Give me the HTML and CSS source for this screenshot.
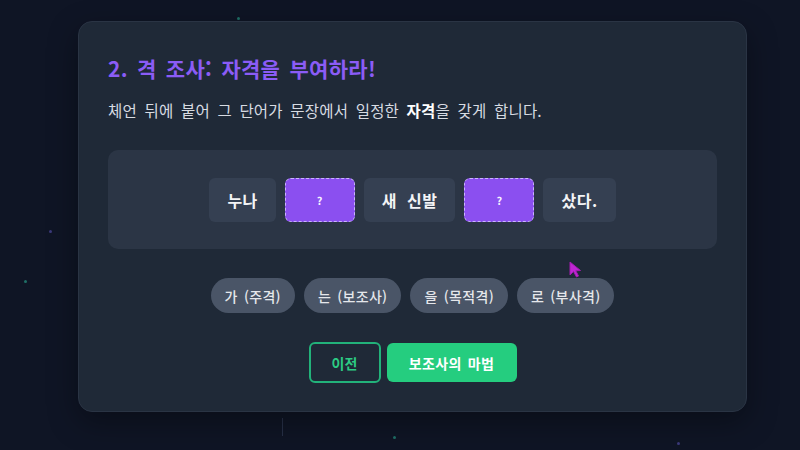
FILE: index.html
```html
<!DOCTYPE html>
<html lang="ko">
<head>
<meta charset="utf-8">
<title>격 조사</title>
<link rel="stylesheet" href="styles.css">
</head>
<body>
<div class="bg">
  <span class="dot teal" style="left:237px;top:17px"></span>
  <span class="dot purple" style="left:49px;top:230px"></span>
  <span class="dot teal" style="left:24px;top:280px"></span>
  <span class="line" style="left:282px;top:418px"></span>
  <span class="dot teal" style="left:393px;top:436px"></span>
  <span class="dot purple" style="left:677px;top:442px"></span>
</div>
<main class="card">
  <h1 class="title">2. 격 조사: 자격을 부여하라!</h1>
  <p class="desc">체언 뒤에 붙어 그 단어가 문장에서 일정한 <b>자격</b>을 갖게 합니다.</p>
  <div class="sentence">
    <span class="word">누나</span>
    <span class="word blank">?</span>
    <span class="word">새 신발</span>
    <span class="word blank">?</span>
    <span class="word">샀다.</span>
  </div>
  <div class="chips">
    <button class="chip">가 (주격)</button>
    <button class="chip">는 (보조사)</button>
    <button class="chip">을 (목적격)</button>
    <button class="chip">로 (부사격)</button>
  </div>
  <div class="actions">
    <button class="btn outline">이전</button>
    <button class="btn solid">보조사의 마법</button>
  </div>
</main>
<svg class="cursor" width="14" height="18" viewBox="0 0 14 18"><path d="M1 1 L1 14 L4.5 10.5 L7.5 16 L9.5 15 L6.8 9.8 L11.5 9.5 Z" fill="#c026d3" stroke="#a21caf" stroke-width="1"/></svg>
</body>
</html>
```

FILE: styles.css
```css
* { box-sizing: border-box; }
html, body { margin: 0; padding: 0; }
body {
  width: 800px;
  height: 450px;
  overflow: hidden;
  background: #0f1525;
  font-family: "Noto Sans CJK KR", "Noto Sans", sans-serif;
  position: relative;
}
.bg { position: absolute; inset: 0; }
.dot { position: absolute; width: 3px; height: 3px; border-radius: 50%; }
.dot.teal { background: #1f6f66; }
.dot.purple { background: #3b3a7a; }
.line { position: absolute; width: 1px; height: 18px; background: #273047; }
.card {
  position: relative;
  margin: 21px 0 0 78px;
  width: 669px;
  background: #1f2937;
  border: 1px solid #2a3444;
  border-radius: 14px;
  padding: 32px 29px 28px;
  box-shadow: 0 10px 30px rgba(0,0,0,0.35);
}
.title {
  margin: 0;
  font-size: 21px;
  line-height: 28px;
  font-weight: 700;
  color: #8b5cf6;
  word-spacing: 3px;
  letter-spacing: 0.3px;
}
.desc {
  margin: 16px 0 0;
  font-size: 15.5px;
  line-height: 24px;
  color: #d7dbe2;
  word-spacing: 3px;
  letter-spacing: 0.2px;
}
.desc b { color: #ffffff; font-weight: 700; }
.sentence {
  margin-top: 28px;
  height: 99px;
  background: #2b3545;
  border-radius: 10px;
  display: flex;
  align-items: center;
  justify-content: center;
  gap: 9px;
}
.word {
  height: 44px;
  padding: 0 18px;
  display: flex;
  align-items: center;
  justify-content: center;
  background: #354052;
  border-radius: 6px;
  color: #f3f4f6;
  font-size: 16px;
  font-weight: 700;
  word-spacing: 5px;
  letter-spacing: 0.5px;
}
.word.blank {
  width: 70px;
  background: #8b4ff0;
  border: 1px dashed #c9b6fb;
  font-size: 11px;
  color: #f5f3ff;
}
.chips {
  margin-top: 29px;
  display: flex;
  justify-content: center;
  gap: 9px;
}
.chip {
  height: 35px;
  padding: 0 14px;
  border: none;
  border-radius: 18px;
  background: #4a5567;
  color: #e5e7eb;
  font-family: inherit;
  font-size: 14px;
  font-weight: 500;
  word-spacing: 2px;
  letter-spacing: 0.3px;
}
.actions {
  margin-top: 29px;
  display: flex;
  justify-content: center;
  align-items: center;
  gap: 6px;
}
.btn {
  font-family: inherit;
  font-size: 14px;
  font-weight: 700;
  border-radius: 6px;
}
.btn.outline {
  width: 72px;
  height: 41px;
  background: transparent;
  border: 2px solid #22b27a;
  color: #2ccb84;
}
.btn.solid {
  width: 130px;
  height: 39px;
  background: #25cd7f;
  border: none;
  color: #ffffff;
  word-spacing: 2px;
  letter-spacing: 0.3px;
}
.cursor { position: absolute; left: 569px; top: 261px; }
```
